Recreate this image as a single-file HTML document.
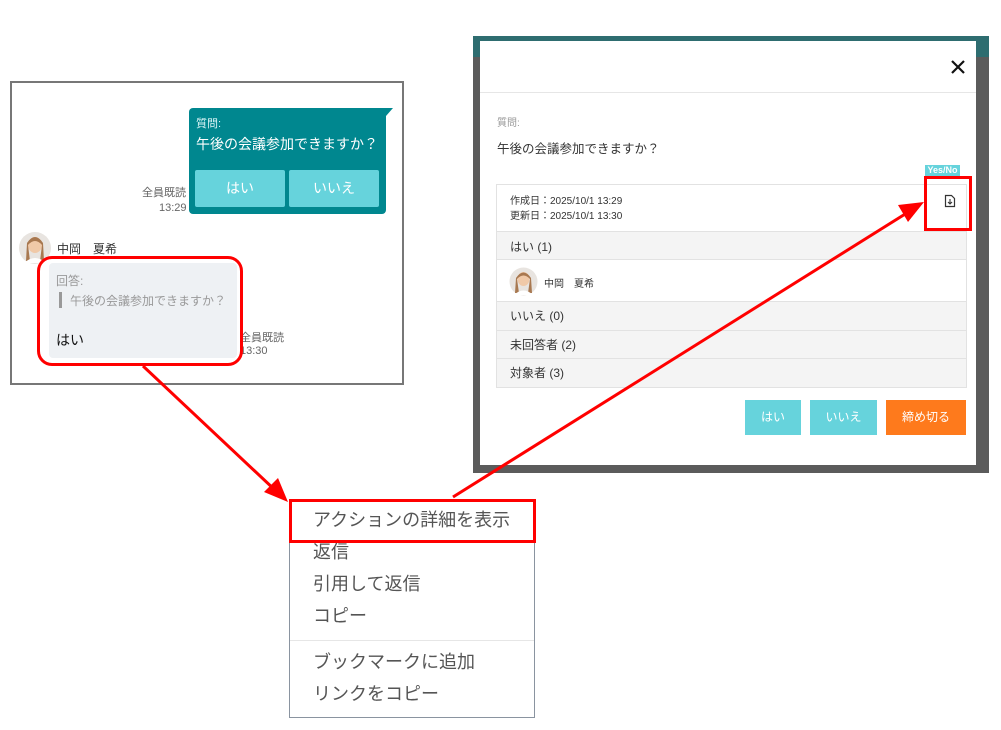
<!DOCTYPE html>
<html><head><meta charset="utf-8"><style>
body{margin:0;width:1001px;height:730px;background:#fff;position:relative;overflow:hidden;font-family:"Liberation Sans","Noto Sans CJK JP",sans-serif;}
.a{position:absolute;white-space:nowrap;}
</style></head><body>
<!-- left chat box -->
<div class="a" style="left:10px;top:81px;width:390px;height:300px;border:2px solid #777;"></div>
<div class="a" style="left:189px;top:108px;width:197px;height:106px;background:#00878f;border-radius:4px;"></div>
<svg class="a" style="left:380px;top:108px" width="14" height="10"><path d="M0 0 L13 0 L6 8 Z" fill="#00878f"/></svg>
<div class="a" style="left:196px;top:115px;color:#d9f3f5;font-size:11px;">質問:</div>
<div class="a" style="left:196px;top:134px;color:#fff;font-size:14px;">午後の会議参加できますか？</div>
<div class="a" style="left:195px;top:170px;width:90px;height:37px;background:#66d3dc;border-radius:2px;color:#fff;font-size:14px;text-align:center;line-height:37px;">はい</div>
<div class="a" style="left:289px;top:170px;width:90px;height:37px;background:#66d3dc;border-radius:2px;color:#fff;font-size:14px;text-align:center;line-height:37px;">いいえ</div>
<div class="a" style="left:142px;top:184px;color:#666;font-size:11px;">全員既読</div>
<div class="a" style="left:159px;top:202px;color:#666;font-size:11px;">13:29</div>
<svg class="a" style="left:18px;top:231px" width="34" height="34"><circle cx="17" cy="17" r="16" fill="#e8e4e0"/><ellipse cx="17" cy="14" rx="7" ry="8" fill="#f0c9a8"/><path d="M9 12 Q17 0 25 12 L26 30 L22 30 L24 14 Q17 6 10 14 L12 30 L8 30Z" fill="#a87850"/><path d="M6 32 Q17 22 28 32Z" fill="#fff"/></svg>
<div class="a" style="left:57px;top:240px;color:#333;font-size:12px;">中岡　夏希</div>
<div class="a" style="left:49px;top:263px;width:188px;height:95px;background:#eef1f4;border-radius:4px;"></div>
<div class="a" style="left:56px;top:272px;color:#999;font-size:12px;">回答:</div>
<div class="a" style="left:59px;top:292px;width:3px;height:16px;background:#999;"></div>
<div class="a" style="left:70px;top:292px;color:#999;font-size:12px;">午後の会議参加できますか？</div>
<div class="a" style="left:56px;top:330px;color:#111;font-size:14px;">はい</div>
<div class="a" style="left:240px;top:329px;color:#666;font-size:11px;">全員既読</div>
<div class="a" style="left:240px;top:345px;color:#666;font-size:11px;">13:30</div>
<div class="a" style="left:37px;top:256px;width:200px;height:104px;border:3px solid #f00;border-radius:15px;"></div>

<!-- modal -->
<div class="a" style="left:473px;top:36px;width:516px;height:437px;background:#5b5b5b;"></div>
<div class="a" style="left:473px;top:36px;width:516px;height:21px;background:#2e6d70;"></div>
<div class="a" style="left:480px;top:41px;width:496px;height:424px;background:#fff;"></div>
<div class="a" style="left:480px;top:92px;width:496px;height:1px;background:#e6e6e6;"></div>
<svg class="a" style="left:951px;top:60px" width="14" height="14"><path d="M1 1L13 13M13 1L1 13" stroke="#111" stroke-width="2.2"/></svg>
<div class="a" style="left:497px;top:114px;color:#999;font-size:10px;">質問:</div>
<div class="a" style="left:497px;top:138px;color:#333;font-size:12.5px;">午後の会議参加できますか？</div>
<div class="a" style="left:925px;top:165px;width:35px;height:11px;background:#66d3dc;color:#fff;font-size:9px;font-weight:bold;text-align:center;line-height:11px;">Yes/No</div>
<div class="a" style="left:510px;top:194px;color:#333;font-size:10px;line-height:15px;">作成日：2025/10/1 13:29<br>更新日：2025/10/1 13:30</div>
<svg class="a" style="left:944px;top:194px" width="12" height="14"><path d="M1.5 1.5H7.5L10.5 4.5V12.5H1.5Z" fill="none" stroke="#333" stroke-width="1.2"/><path d="M6 5V10M4 8L6 10L8 8" fill="none" stroke="#333" stroke-width="1.1"/></svg>
<div class="a" style="left:497px;top:231px;width:469px;height:29px;background:#f4f4f4;border-top:1px solid #e2e2e2;border-bottom:1px solid #e2e2e2;box-sizing:border-box;"></div>
<div class="a" style="left:510px;top:238px;color:#333;font-size:12px;">はい (1)</div>
<svg class="a" style="left:509px;top:267px" width="29" height="29"><circle cx="14.5" cy="14.5" r="14" fill="#e8e4e0"/><ellipse cx="14.5" cy="12" rx="6" ry="7" fill="#f0c9a8"/><path d="M7 11 Q14.5 0 22 11 L23 26 L19 26 L21 12 Q14.5 5 8 12 L10 26 L6 26Z" fill="#a87850"/><path d="M5 28 Q14.5 19 24 28Z" fill="#fff"/></svg>
<div class="a" style="left:544px;top:275px;color:#333;font-size:10px;">中岡　夏希</div>
<div class="a" style="left:497px;top:301px;width:469px;height:86px;background:#f4f4f4;border-top:1px solid #e2e2e2;"></div>
<div class="a" style="left:497px;top:330px;width:469px;height:1px;background:#e2e2e2;"></div>
<div class="a" style="left:497px;top:358px;width:469px;height:1px;background:#e2e2e2;"></div>
<div class="a" style="left:496px;top:184px;width:469px;height:202px;border:1px solid #e2e2e2;"></div>
<div class="a" style="left:510px;top:307px;color:#333;font-size:12px;">いいえ (0)</div>
<div class="a" style="left:510px;top:336px;color:#333;font-size:12px;">未回答者 (2)</div>
<div class="a" style="left:510px;top:364px;color:#333;font-size:12px;">対象者 (3)</div>
<div class="a" style="left:745px;top:400px;width:56px;height:35px;background:#66d3dc;color:#fff;font-size:12px;text-align:center;line-height:35px;">はい</div>
<div class="a" style="left:810px;top:400px;width:67px;height:35px;background:#66d3dc;color:#fff;font-size:12px;text-align:center;line-height:35px;">いいえ</div>
<div class="a" style="left:886px;top:400px;width:80px;height:35px;background:#fe7a1c;color:#fff;font-size:12px;text-align:center;line-height:35px;">締め切る</div>
<div class="a" style="left:924px;top:176px;width:42px;height:49px;border:3px solid #f00;"></div>

<!-- context menu -->
<div class="a" style="left:289px;top:500px;width:244px;height:216px;border:1px solid #8a94a0;background:#fff;"></div>
<div class="a" style="left:290px;top:640px;width:244px;height:1px;background:#e6e6e6;"></div>
<div class="a" style="left:313px;top:508px;color:#555;font-size:18px;line-height:24px;">アクションの詳細を表示</div>
<div class="a" style="left:313px;top:540px;color:#555;font-size:18px;line-height:24px;">返信</div>
<div class="a" style="left:313px;top:572px;color:#555;font-size:18px;line-height:24px;">引用して返信</div>
<div class="a" style="left:313px;top:604px;color:#555;font-size:18px;line-height:24px;">コピー</div>
<div class="a" style="left:313px;top:650px;color:#555;font-size:18px;line-height:24px;">ブックマークに追加</div>
<div class="a" style="left:313px;top:682px;color:#555;font-size:18px;line-height:24px;">リンクをコピー</div>
<div class="a" style="left:289px;top:499px;width:241px;height:38px;border:3px solid #f00;"></div>

<!-- arrows -->
<svg class="a" style="left:0;top:0" width="1001" height="730">
<line x1="143" y1="366" x2="276" y2="491" stroke="#f00" stroke-width="3"/>
<path d="M288 502 L264 492 L278 478 Z" fill="#f00"/>
<line x1="453" y1="497" x2="910" y2="211" stroke="#f00" stroke-width="3"/>
<path d="M924 202 L908 222 L898 205 Z" fill="#f00"/>
</svg>
</body></html>
